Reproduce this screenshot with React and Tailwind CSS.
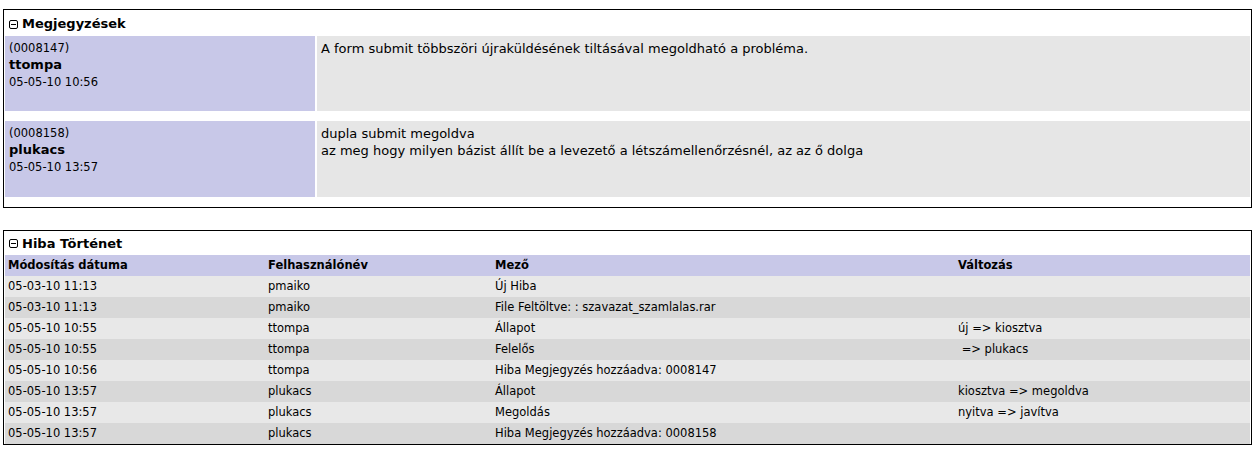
import React from "react";

const font = { fontFamily: '"DejaVu Sans", Verdana, sans-serif' };

function Toggle() {
  return (
    <svg width="9" height="9" viewBox="0 0 9 9" className="shrink-0">
      <rect x="0.5" y="0.5" width="8" height="8" rx="1.5" fill="none" stroke="#000" strokeWidth="1" />
      <line x1="2" y1="4.5" x2="7" y2="4.5" stroke="#000" strokeWidth="1" />
    </svg>
  );
}

const comments = [
  { id: "(0008147)", user: "ttompa", date: "05-05-10 10:56", h: "h-[75px]", text: ["A form submit többszöri újraküldésének tiltásával megoldható a probléma."] },
  { id: "(0008158)", user: "plukacs", date: "05-05-10 13:57", h: "h-[76px]", text: ["dupla submit megoldva", "az meg hogy milyen bázist állít be a levezető a létszámellenőrzésnél, az az ő dolga"] },
];

const history = [
  ["05-03-10 11:13", "pmaiko", "Új Hiba", ""],
  ["05-03-10 11:13", "pmaiko", "File Feltöltve: : szavazat_szamlalas.rar", ""],
  ["05-05-10 10:55", "ttompa", "Állapot", "új => kiosztva"],
  ["05-05-10 10:55", "ttompa", "Felelős", "\u00a0=> plukacs"],
  ["05-05-10 10:56", "ttompa", "Hiba Megjegyzés hozzáadva: 0008147", ""],
  ["05-05-10 13:57", "plukacs", "Állapot", "kiosztva => megoldva"],
  ["05-05-10 13:57", "plukacs", "Megoldás", "nyitva => javítva"],
  ["05-05-10 13:57", "plukacs", "Hiba Megjegyzés hozzáadva: 0008158", ""],
];

export default function App() {
  return (
    <div className="bg-white w-[1257px] h-[457px] pt-[9px] pl-[3px] text-black" style={font}>
      <div className="w-[1249px] border border-black px-px">
        <div className="h-[26px] flex items-center gap-[4px] pl-[4px] pt-[2px] text-[13px] font-bold">
          <Toggle />
          <span>Megjegyzések</span>
        </div>
        {comments.map((c, i) => (
          <div key={i} className={"flex gap-[2px] mb-[10px] " + c.h}>
            <div className="w-[310px] bg-[#c8c8e8] px-[4px] pt-[4px]">
              <div className="text-[11.5px] leading-[16px]">{c.id}</div>
              <div className="text-[13px] font-bold leading-[18px]">{c.user}</div>
              <div className="text-[11.5px] leading-[17px]">{c.date}</div>
            </div>
            <div className="flex-1 bg-[#e6e6e6] px-[4px] pt-[4px] text-[13px] leading-[17px]">
              {c.text.map((t, j) => (
                <div key={j}>{t}</div>
              ))}
            </div>
          </div>
        ))}
      </div>

      <div className="w-[1249px] border border-black px-px mt-[22px]">
        <div className="h-[24px] flex items-center gap-[4px] pl-[4px] pt-[1px] text-[13px] font-bold">
          <Toggle />
          <span>Hiba Történet</span>
        </div>
        <div className="grid grid-cols-[260px_227px_463px_1fr] text-[11.5px]">
          {["Módosítás dátuma", "Felhasználónév", "Mező", "Változás"].map((h) => (
            <div key={h} className="h-[21px] flex items-center bg-[#c8c8e8] px-[3px] font-bold">
              {h}
            </div>
          ))}
          {history.map((r, i) =>
            r.map((cell, j) => (
              <div
                key={i + "-" + j}
                className={
                  "h-[21px] flex items-center px-[3px] whitespace-pre " +
                  (i % 2 === 0 ? "bg-[#e8e8e8]" : "bg-[#d8d8d8]")
                }
              >
                {cell}
              </div>
            ))
          )}
        </div>
      </div>
    </div>
  );
}
